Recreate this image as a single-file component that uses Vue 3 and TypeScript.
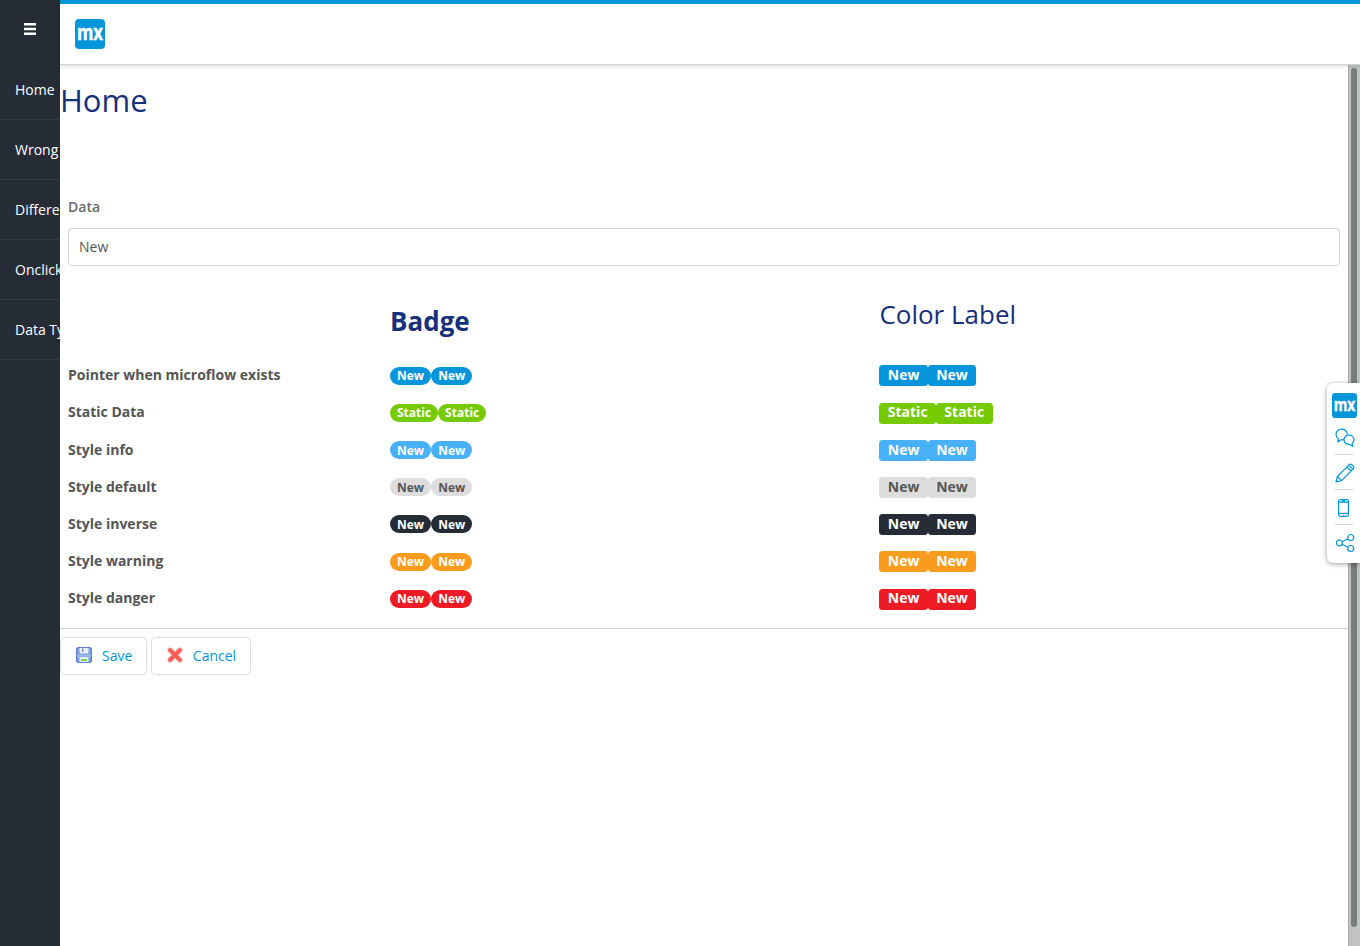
<script setup lang="ts">
interface StyleRow {
  caption: string
  text: string
  tone: string
}

const menu: string[] = ['Home', 'Wrong', 'Differe', 'Onclick', 'Data Ty']

const rows: StyleRow[] = [
  { caption: 'Pointer when microflow exists', text: 'New', tone: 'primary' },
  { caption: 'Static Data', text: 'Static', tone: 'success' },
  { caption: 'Style info', text: 'New', tone: 'info' },
  { caption: 'Style default', text: 'New', tone: 'default' },
  { caption: 'Style inverse', text: 'New', tone: 'inverse' },
  { caption: 'Style warning', text: 'New', tone: 'warning' },
  { caption: 'Style danger', text: 'New', tone: 'danger' },
]
</script>

<template>
  <div class="app">
    <nav class="sidebar">
      <div class="toggle">
        <svg width="12" height="12" viewBox="0 0 12 12">
          <path d="M0 1.2H12M0 6H12M0 10.8H12" stroke="#fff" stroke-width="2.4" />
        </svg>
      </div>
      <a v-for="item in menu" :key="item" class="menu-item">{{ item }}</a>
    </nav>

    <div class="page">
      <header class="topbar">
        <svg class="logo" width="30" height="30" viewBox="0 0 30 30">
          <rect width="30" height="30" rx="4" fill="#0595db" />
          <text x="2" y="21.2" class="logo-text" textLength="26" lengthAdjust="spacingAndGlyphs">mx</text>
        </svg>
      </header>

      <div class="body">
        <main class="content">
          <h1>Home</h1>
          <section class="form">
            <label class="field-label" for="data">Data</label>
            <input id="data" class="field" type="text" value="New" />
            <div class="table">
              <div class="row head">
                <span />
                <h2 class="bold">Badge</h2>
                <h2 class="light">Color Label</h2>
              </div>
              <div v-for="row in rows" :key="row.caption" class="row">
                <span class="caption">{{ row.caption }}</span>
                <span class="pair">
                  <span v-for="n in 2" :key="n" class="badge" :class="row.tone">{{ row.text }}</span>
                </span>
                <span class="pair">
                  <span v-for="n in 2" :key="n" class="label" :class="row.tone">{{ row.text }}</span>
                </span>
              </div>
            </div>
          </section>
          <footer class="actions">
            <button class="btn save">
              <svg width="16" height="16" viewBox="0 0 16 16">
                <rect x=".5" y=".5" width="15" height="15" rx="1.5" fill="#7b9fdc" stroke="#5f82c4" />
                <rect x="3.5" y="1" width="9" height="5.5" fill="#e9f0fb" />
                <rect x="6" y="1.5" width="1.5" height="3.5" fill="#6c8dc6" />
                <rect x="1" y="7.5" width="14" height="2" fill="#9dbbe9" />
                <rect x="3.5" y="10" width="9" height="5" fill="#e6f0ea" />
                <rect x="5" y="12" width="6" height="2" fill="#85cf58" />
              </svg>
              Save
            </button>
            <button class="btn cancel">
              <svg width="16" height="16" viewBox="0 0 16 16">
                <path d="M3 3L13 13M13 3L3 13" stroke="#f58a86" stroke-width="4.8" stroke-linecap="round" />
                <path d="M3.2 3.2L12.8 12.8M12.8 3.2L3.2 12.8" stroke="#f95c57" stroke-width="3.2" stroke-linecap="round" />
              </svg>
              Cancel
            </button>
          </footer>
        </main>
        <div class="scrollbar"><div class="thumb" /></div>
      </div>
    </div>

    <aside class="tools">
      <svg class="tool-logo" width="25" height="25" viewBox="0 0 30 30">
        <rect width="30" height="30" rx="4" fill="#0595db" />
        <text x="2" y="21.2" class="logo-text" textLength="26" lengthAdjust="spacingAndGlyphs">mx</text>
      </svg>
      <div class="tool chat">
        <svg width="20" height="20" viewBox="0 0 20 20">
          <path d="M12.4 6.5C12 3.2 9.5 1.2 6.6 1.2C3.4 1.2 1 3.5 1 6.4C1 8.4 2 10 3.5 10.9L2.6 14L6 11.8C7 12 8 11.8 9 11.4" />
          <path d="M14 7.1C16.9 7.1 19 9.1 19 11.7C19 13.3 18.2 14.6 17 15.4L17.9 18.4L14.6 16.4C11.5 16.6 9 14.5 9 11.8C9 9.1 11.2 7.1 14 7.1Z" />
        </svg>
      </div>
      <div class="tool pencil">
        <svg width="20" height="20" viewBox="0 0 20 20">
          <path d="M1 19L2.4 13.5L14 1.9C15 .9 16 .9 16.9 1.8L18.2 3.1C19.1 4 19.1 5 18.1 6L6.5 17.6L1 19ZM2.4 13.5L6.5 17.6M12 3.9L16.1 8M13.7 2.2L17.8 6.3M1.3 17.3L2.7 18.7" />
        </svg>
      </div>
      <div class="tool phone">
        <svg width="20" height="20" viewBox="0 0 20 20">
          <rect x="4.6" y="1.6" width="9.8" height="16.8" rx="1.8" />
          <path d="M4.6 4.2H14.4M4.6 15.3H14.4M7.8 2.8H11.2M9 17H10" />
        </svg>
      </div>
      <div class="tool share">
        <svg width="20" height="20" viewBox="0 0 20 20">
          <circle cx="4.4" cy="10" r="2.9" /><circle cx="15.7" cy="4.5" r="3" /><circle cx="15.7" cy="15.5" r="3" />
          <path d="M7 8.7L13 5.8M7 11.3L13 14.2" />
        </svg>
      </div>
    </aside>
  </div>
</template>

<style>
body {
  margin: 0;
  overflow: hidden;
}
</style>

<style scoped>
* {
  box-sizing: border-box;
}
.app {
  display: flex;
  width: 100vw;
  height: 100vh;
  overflow: hidden;
  background: #fff;
  color: #555;
  font: 14px/20px 'Open Sans', sans-serif;
}
.sidebar {
  flex: 0 0 60px;
  overflow: hidden;
  background: #252c36;
}
.toggle {
  height: 60px;
  padding: 23px 24px 0;
}
.toggle svg {
  display: block;
}
.menu-item {
  display: block;
  height: 60px;
  padding-left: 15px;
  border-bottom: 1px solid #323946;
  color: #fff;
  line-height: 60px;
  white-space: nowrap;
}
.page {
  flex: 1;
  min-width: 0;
  display: flex;
  flex-direction: column;
}
.topbar {
  flex: 0 0 65px;
  position: relative;
  padding: 15px 15px 0;
  border-top: 4px solid #0595db;
  border-bottom: 1px solid #d2d2d2;
  box-shadow: 0 2px 4px rgba(0, 0, 0, 0.12);
}
.logo,
.tool-logo {
  display: block;
  overflow: visible;
}
.logo-text {
  fill: #fff;
  font: 700 20.5px 'Open Sans', sans-serif;
  stroke: #fff;
  stroke-width: 0.5px;
}
.body {
  flex: 1;
  display: flex;
  min-height: 0;
}
.content {
  flex: 1;
}
h1 {
  margin: 13px 0 0;
  color: #16307a;
  font-size: 31px;
  font-weight: 400;
  line-height: 44px;
}
.form {
  padding: 75px 8px 0;
}
.field-label {
  display: block;
  font-weight: 600;
  color: #6c6c6c;
}
.field {
  display: block;
  width: 100%;
  height: 38px;
  margin-top: 11px;
  padding: 0 10px 2px;
  border: 1px solid #d2d2d2;
  border-radius: 4px;
  background: #fff;
  color: #555;
  font: inherit;
}
.table {
  padding-top: 24px;
}
.row {
  display: grid;
  grid-template-columns: 322px 489.4px 1fr;
  align-items: start;
  height: 37.2px;
}
.row.head {
  height: 75.2px;
}
h2 {
  margin: 0;
  color: #16307a;
  font-size: 26px;
  line-height: 36px;
}
h2.bold {
  padding-top: 13px;
  font-weight: 700;
}
h2.light {
  padding-top: 6px;
  font-weight: 400;
}
.caption {
  font-weight: 700;
}
.pair {
  display: flex;
}
.badge {
  height: 18px;
  margin-top: 1.4px;
  padding: 0.6px 7px 0;
  border-radius: 9px;
  color: #fff;
  font-size: 12px;
  font-weight: 700;
  line-height: 18px;
}
.label {
  height: 21px;
  margin-top: 0.22px;
  padding: 0.8px 8.4px 0;
  border-radius: 3.5px;
  color: #fff;
  font-weight: 700;
  line-height: 18px;
}
.primary {
  background: #0595db;
}
.success {
  background: #76ca02;
}
.info {
  background: #48b0f7;
}
.default {
  background: #ddd;
  color: #555;
}
.inverse {
  background: #252c36;
}
.warning {
  background: #f99b1d;
}
.danger {
  background: #ed1c24;
}
.actions {
  display: flex;
  gap: 4px;
  margin-top: 2.4px;
  padding-top: 8px;
  border-top: 1px solid #d2d2d2;
}
.btn {
  display: flex;
  align-items: center;
  height: 38px;
  padding: 0 14px 0 15px;
  gap: 10px;
  border: 1px solid #ddd;
  border-radius: 4px;
  background: #fff;
  color: #0595db;
  font: inherit;
}
.btn.cancel {
  gap: 9.5px;
  padding-right: 13.7px;
}
.btn svg {
  margin-bottom: 2px;
}
.scrollbar {
  flex: 0 0 12px;
  padding: 3px 3px 3px 2px;
  border-left: 1px solid #a8aaaa;
  background: #c1c3c3;
}
.thumb {
  width: 6px;
  height: 859px;
  border-radius: 3px;
  background: #777c7e;
}
.tools {
  position: absolute;
  top: 383px;
  right: 0;
  width: 33px;
  height: 180px;
  padding: 10px 0 0 5px;
  border-radius: 6px 0 0 6px;
  background: #fff;
  box-shadow: 0 1px 5px rgba(0, 0, 0, 0.4);
}
.tool {
  width: 18px;
  height: 35px;
  margin-left: 3px;
  padding-top: 8px;
  border-top: 1px solid #d2d2d2;
}
.tool.chat {
  height: 36px;
  padding-top: 10px;
  border-top: 0;
}
.tool svg {
  display: block;
  overflow: visible;
  fill: none;
  stroke: #0595db;
  stroke-width: 1.2;
  stroke-linejoin: round;
}
.tool.phone svg {
  margin-left: -1px;
}
</style>
